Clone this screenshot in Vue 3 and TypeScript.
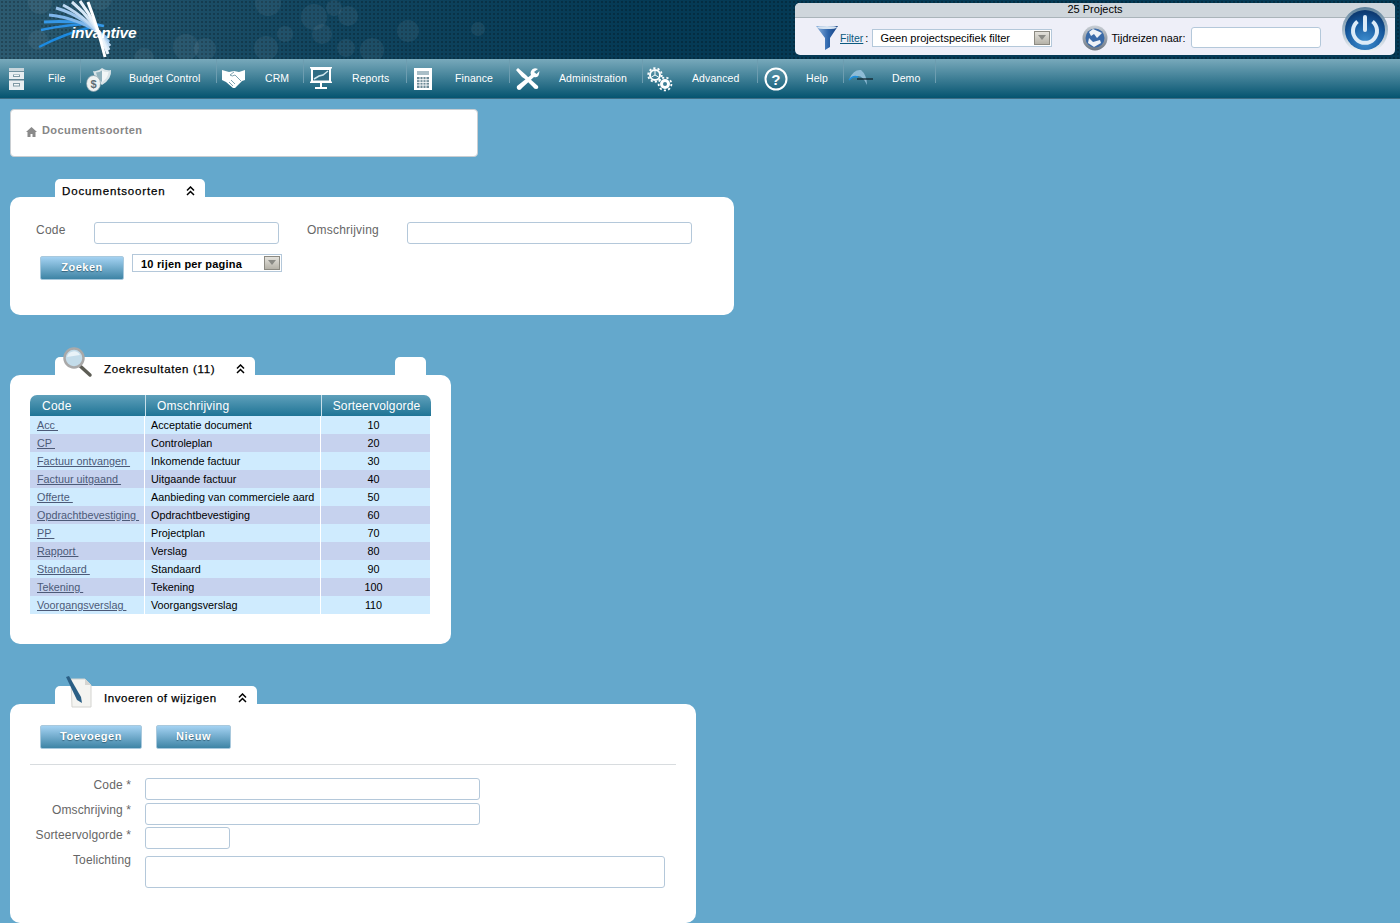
<template>
  <div class="page">
    <header class="top">
      <svg class="bubbles" width="760" height="59" viewBox="0 0 760 59">
        <g fill="#fff" fill-opacity=".06">
          <circle cx="40" cy="2" r="12" /><circle cx="100" cy="-2" r="12" /><circle cx="38" cy="40" r="10" />
          <circle cx="186" cy="47" r="13" /><circle cx="205" cy="49" r="11" /><circle cx="285" cy="34" r="8" />
          <circle cx="268" cy="3" r="13" /><circle cx="266" cy="48" r="12" /><circle cx="314" cy="17" r="13" />
          <circle cx="334" cy="8" r="8" /><circle cx="348" cy="16" r="10" /><circle cx="322" cy="34" r="10" />
          <circle cx="346" cy="48" r="9" /><circle cx="372" cy="50" r="12" /><circle cx="408" cy="31" r="11" />
          <circle cx="478" cy="29" r="7" /><circle cx="144" cy="58" r="10" />
        </g>
      </svg>
      <div class="logo">
        <svg width="115" height="59" viewBox="0 0 115 59">
          <g fill="none">
            <path d="M39 47 Q66 33 92 27" stroke="#1c8ae0" stroke-width="2.4" />
            <path d="M41 30 Q68 24 96 24" stroke="#2a90e4" stroke-width="2.4" />
            <path d="M44 22 Q74 20 104 26" stroke="#3597e6" stroke-width="2.8" />
            <path d="M49 15 Q80 18 107 38" stroke="#7fb6ea" stroke-width="3" />
            <path d="M56 8 Q84 16 109 42" stroke="#9cc5ec" stroke-width="3" />
            <path d="M63 5 Q88 18 110 46" stroke="#bcd7f1" stroke-width="3" />
            <path d="M72 2 Q94 20 109 50" stroke="#d6e7f6" stroke-width="3" />
            <path d="M80 1 Q97 24 108 54" stroke="#eaf3fb" stroke-width="3" />
            <path d="M88 2 Q98 28 105 57" stroke="#fff" stroke-width="3" />
          </g>
        </svg>
        <span class="logo-text">invantive</span>
      </div>
      <div class="project-box">
        <div class="project-count">25 Projects</div>
        <div class="project-row">
          <svg class="funnel" width="24" height="25" viewBox="0 0 24 25">
            <defs>
              <linearGradient id="fg" x1="0" x2="1" y1="0" y2="0">
                <stop offset="0" stop-color="#8fb4de" /><stop offset=".55" stop-color="#2e66ad" /><stop offset="1" stop-color="#16407f" />
              </linearGradient>
            </defs>
            <path d="M1 1 H23 L15 13 V22 L10 25 V13 Z" fill="url(#fg)" />
            <ellipse cx="12" cy="2.5" rx="10" ry="1.6" fill="#d6e3f1" />
          </svg>
          <a class="filter-link">Filter</a><span class="colon">:</span>
          <div class="combo top-combo">
            <span>Geen projectspecifiek filter</span>
            <i class="combo-btn"></i>
          </div>
          <svg class="clock" width="26" height="26" viewBox="0 0 26 26">
            <defs>
              <linearGradient id="cg" x1="0" x2="0" y1="0" y2="1">
                <stop offset="0" stop-color="#c9cfd6" /><stop offset="1" stop-color="#6c7682" />
              </linearGradient>
            </defs>
            <circle cx="13" cy="13" r="12.5" fill="url(#cg)" />
            <circle cx="13" cy="13" r="9.5" fill="#3a6aa8" />
            <path d="M11 4 L20 8 L15 13 L12 9 L9 11 L7 7 Z" fill="#eef2f7" />
            <path d="M7 13 L11 17 L18 15 L19 18 L12 22 L6 18 Z" fill="#eef2f7" />
          </svg>
          <label class="travel">Tijdreizen naar:</label>
          <input class="input travel-input" type="text">
        </div>
      </div>
      <div class="power">
        <svg width="48" height="48" viewBox="0 0 48 48">
          <defs>
            <radialGradient id="pg" cx=".5" cy=".8" r=".75">
              <stop offset="0" stop-color="#3f8fd0" /><stop offset=".65" stop-color="#175a9f" /><stop offset="1" stop-color="#0c3a72" />
            </radialGradient>
            <linearGradient id="pr" x1="0" x2="0" y1="0" y2="1">
              <stop offset="0" stop-color="#5a7f9a" /><stop offset="1" stop-color="#f5f7f9" />
            </linearGradient>
          </defs>
          <circle cx="24" cy="24" r="23" fill="url(#pr)" />
          <circle cx="24" cy="24" r="20" fill="url(#pg)" />
          <path d="M16.5 15.5 A12 12 0 1 0 31.5 15.5" fill="none" stroke="#dcebf8" stroke-width="4" />
          <path d="M24 11 V24" stroke="#dcebf8" stroke-width="4" stroke-linecap="round" />
        </svg>
      </div>
    </header>

    <nav class="menu">
      <div v-for="item in menu" :key="item.label" class="menu-item">
        <span class="menu-icon">
          <svg width="36" height="38" viewBox="0 0 36 38" v-html="item.icon"></svg>
        </span>
        <span>{{ item.label }}</span>
      </div>
    </nav>

    <main class="content">
      <div class="crumb">
        <svg width="11" height="10" viewBox="0 0 11 10"><path d="M5.5 0 L11 5 H9.5 V10 H6.5 V7 H4.5 V10 H1.5 V5 H0 Z" fill="#8a8a8a" /></svg>
        <span>Documentsoorten</span>
      </div>

      <section class="section first">
        <div class="tabs">
          <div class="tab tab-1"><span class="tab-title">Documentsoorten</span><span class="chev">
            <svg width="9" height="10" viewBox="0 0 9 10"><path d="M1 4.5 L4.5 1 L8 4.5 M1 9 L4.5 5.5 L8 9" fill="none" stroke="#000" stroke-width="1.5" /></svg>
          </span></div>
        </div>
        <div class="panel search-panel">
          <div class="search-row">
            <label class="lbl code-lbl">Code</label>
            <input class="input code-input" type="text">
            <label class="lbl oms-lbl">Omschrijving</label>
            <input class="input oms-input" type="text">
          </div>
          <div class="search-actions">
            <button class="btn zoeken">Zoeken</button>
            <div class="combo rows-combo">
              <span>10 rijen per pagina</span>
              <i class="combo-btn"></i>
            </div>
          </div>
        </div>
      </section>

      <section class="section second">
        <div class="tabs">
          <div class="tab tab-2">
            <svg class="tab-icon magnifier" width="32" height="32" viewBox="0 0 32 32">
              <path d="M17 18 L28 28" stroke="#5d5d55" stroke-width="3.5" stroke-linecap="round" />
              <circle cx="12" cy="11" r="9.5" fill="#c3dcea" stroke="#a9a9a9" stroke-width="2.5" />
              <path d="M5 10 A7 7 0 0 1 18 8 Z" fill="#e9f3f8" />
            </svg>
            <span class="tab-title">Zoekresultaten (11)</span><span class="chev">
              <svg width="9" height="10" viewBox="0 0 9 10"><path d="M1 4.5 L4.5 1 L8 4.5 M1 9 L4.5 5.5 L8 9" fill="none" stroke="#000" stroke-width="1.5" /></svg>
            </span>
          </div>
          <div class="tab tab-empty"></div>
        </div>
        <div class="panel table-panel">
          <table class="grid">
            <thead>
              <tr><th class="c1">Code</th><th class="c2">Omschrijving</th><th class="c3">Sorteervolgorde</th></tr>
            </thead>
            <tbody>
              <tr v-for="row in rows" :key="row.code">
                <td class="c1"><a>{{ row.code }}&nbsp;</a></td>
                <td class="c2">{{ row.desc }}</td>
                <td class="c3">{{ row.order }}</td>
              </tr>
            </tbody>
          </table>
        </div>
      </section>

      <section class="section third">
        <div class="tabs">
          <div class="tab tab-3">
            <svg class="tab-icon doc" width="28" height="32" viewBox="0 0 28 32">
              <path d="M6 3 H20 L26 9 V31 H7 Z" fill="#f4f4f1" stroke="#d4d4d0" />
              <path d="M20 3 V9 H26 Z" fill="#d5d5d2" />
              <path d="M1 1 L4 0 L16 21 L17 27 L12 24 Z" fill="#2b5f85" />
            </svg>
            <span class="tab-title">Invoeren of wijzigen</span><span class="chev">
              <svg width="9" height="10" viewBox="0 0 9 10"><path d="M1 4.5 L4.5 1 L8 4.5 M1 9 L4.5 5.5 L8 9" fill="none" stroke="#000" stroke-width="1.5" /></svg>
            </span>
          </div>
        </div>
        <div class="panel edit-panel">
          <div class="edit-actions">
            <button class="btn toevoegen">Toevoegen</button>
            <button class="btn nieuw">Nieuw</button>
          </div>
          <div class="edit-form">
            <label class="lbl form-lbl">Code *</label>
            <input class="input f-wide" type="text">
            <label class="lbl form-lbl">Omschrijving *</label>
            <input class="input f-wide" type="text">
            <label class="lbl form-lbl">Sorteervolgorde *</label>
            <input class="input f-small" type="text">
            <label class="lbl form-lbl note-lbl">Toelichting</label>
            <textarea class="input f-note"></textarea>
          </div>
        </div>
      </section>
    </main>
  </div>
</template>

<script setup lang="ts">
interface MenuItem { label: string; icon: string }
interface DocRow { code: string; desc: string; order: number }

const w = 'fill="#fff"'
const teal = '#3f7f97'
const menu: MenuItem[] = [
  {
    label: 'File',
    icon: `<g transform="translate(1,0)"><path d="M9 9 H24 V31 H9 Z" fill="#e8eef1"/><path d="M9 9 H24 V12 H9 Z" fill="#c9d6dc"/><path d="M9 20 H24 V21.5 H9 Z" fill="#5d8191"/><path d="M9 12 H24 V13 H9 Z" fill="#6f909e"/><path d="M13 15.5 H20 V18 H13 Z M13 24 H20 V27.5 H13 Z" fill="#7d98a4"/><path d="M14 16 H19 V17 H14 Z M14 25 H19 V26.5 H14 Z" fill="#f4f7f8"/></g>`,
  },
  {
    label: 'Budget Control',
    icon: `<path d="M13 12 Q18 13 22 9 Q26 12 31 11 Q32 20 22 26 Q15 21 13 12 Z" fill="#d9e4e8"/><path d="M16 13.5 Q19.5 13.5 22 11.5 V23 Q17.5 20 16 13.5 Z" fill="#8fb1bd"/><path d="M22 11.5 Q25 13.5 28.5 13 Q28 19 22 23 Z" fill="#f2f6f7"/><ellipse cx="13.5" cy="24.5" rx="7" ry="8" fill="#eef2f2" stroke="#7f9aa5" stroke-width=".7"/><text x="10.5" y="29" font-size="11" font-weight="700" font-family="Liberation Sans" fill="#5e6e75">$</text>`,
  },
  {
    label: 'CRM',
    icon: `<path d="M6 11 L13 13 L18 12 L23 13 L29 11 V21 L26 22 L19 29 L17 29 L10 23 L6 21 Z" ${w}/><path d="M18 13 L14 16 Q16 18 19 16 L25 22 M15 21 L19 25 M13 23 L17 27" stroke="#6f98a8" stroke-width=".9" fill="none"/>`,
  },
  {
    label: 'Reports',
    icon: `<path d="M7 8 H29 V9.5 H28 V22.5 H29 V24 H7 V22.5 H8 V9.5 H7 Z" ${w}/><path d="M10 11 H26 V21.5 H10 Z" fill="#2f6c84"/><path d="M11 20 L16 17 L20 16 L25 12" stroke="#cfe6ee" stroke-width="1.5" fill="none"/><path d="M17 24 H19 V28 H24 V30 H12 V28 H17 Z" ${w}/>`,
  },
  {
    label: 'Finance',
    icon: `<path d="M8 9 H26 V31 H8 Z" ${w}/><path d="M11 12 H23 V16 H11 Z" fill="#a9bec7"/><path d="M11 18 H23 V29 H11 Z" fill="#6d8a96"/><path d="M14 18 V29 M17 18 V29 M20 18 V29 M11 20.7 H23 M11 23.4 H23 M11 26.1 H23" stroke="#fff" stroke-width=".9"/>`,
  },
  {
    label: 'Administration',
    icon: `<path d="M7 11 L9 9 L17 16 L20 19 L29 27 Q30 30 27 30 Q25 30 24 28 L16 20 L13 18 Z" ${w}/><path d="M29 10 Q24 8 22 12 Q21 14 22 16 L8 27 Q7 30 10 31 Q12 31 13 29 L25 18 Q29 19 30 15 L30.5 12 L27.5 15 L25 13 Z" ${w}/>`,
  },
  {
    label: 'Advanced',
    icon: `<circle cx="13" cy="16" r="5" fill="none" stroke="#fff" stroke-width="2"/><circle cx="13" cy="16" r="6.8" fill="none" stroke="#fff" stroke-width="1.8" stroke-dasharray="2.2 2.1"/><path d="M13 12 V16 L9.5 18 M13 16 L16.5 18" stroke="#fff" fill="none"/><circle cx="23" cy="25" r="5" ${w}/><circle cx="23" cy="25" r="6.4" fill="none" stroke="#fff" stroke-width="1.8" stroke-dasharray="2.2 2.2"/><circle cx="23" cy="25" r="2" fill="${teal}"/>`,
  },
  {
    label: 'Help',
    icon: `<circle cx="19" cy="20" r="10.5" fill="none" stroke="#fff" stroke-width="2"/><text x="19" y="25.5" font-size="15" font-weight="700" font-family="Liberation Sans" text-anchor="middle" fill="#fff">?</text>`,
  },
  {
    label: 'Demo',
    icon: `<path d="M6 20 Q11 10 18 11 Q24 16 24 26 Q20 17 15 17 Q9 17 6 20 Z" fill="#8fbcd6"/><path d="M6 21 Q10 16 15 18" stroke="#1c8fe0" stroke-width="1.4" fill="none"/><path d="M14 20 H30" stroke="#10222c" stroke-width="1.3"/>`,
  },
]

const rows: DocRow[] = [
  { code: 'Acc', desc: 'Acceptatie document', order: 10 },
  { code: 'CP', desc: 'Controleplan', order: 20 },
  { code: 'Factuur ontvangen', desc: 'Inkomende factuur', order: 30 },
  { code: 'Factuur uitgaand', desc: 'Uitgaande factuur', order: 40 },
  { code: 'Offerte', desc: 'Aanbieding van commerciele aard', order: 50 },
  { code: 'Opdrachtbevestiging', desc: 'Opdrachtbevestiging', order: 60 },
  { code: 'PP', desc: 'Projectplan', order: 70 },
  { code: 'Rapport', desc: 'Verslag', order: 80 },
  { code: 'Standaard', desc: 'Standaard', order: 90 },
  { code: 'Tekening', desc: 'Tekening', order: 100 },
  { code: 'Voorgangsverslag', desc: 'Voorgangsverslag', order: 110 },
]
</script>

<style>
html, body { margin: 0; background: #64a8cc; }
</style>

<style scoped>
.page {
  width: 1400px;
  height: 923px;
  overflow: hidden;
  background: #64a8cc;
  font-family: "Liberation Sans", Arial, sans-serif;
  font-size: 11px;
  color: #000;
}

.top {
  position: relative;
  height: 59px;
  display: flex;
  background-color: #04344f;
  background-image:
    radial-gradient(rgba(0,0,0,.22) 1px, transparent 1.2px),
    linear-gradient(90deg, #2c5a70 0, #124660 22%, #053a55 45%);
  background-size: 4px 4px, 100% 100%;
}
.bubbles { position: absolute; left: 0; top: 0; }
.logo { position: relative; width: 795px; height: 59px; }
.logo-text {
  position: absolute;
  left: 71px;
  top: 24px;
  color: #fff;
  font: italic 700 15.5px "Liberation Sans", sans-serif;
  letter-spacing: -.2px;
}

.project-box {
  position: relative;
  width: 600px;
  height: 52px;
  margin-top: 3px;
  border-radius: 5px;
  background: #eeeff8;
  overflow: hidden;
}
.project-count {
  height: 14px;
  line-height: 13px;
  text-align: center;
  background: #cfd6dc;
  border-bottom: 1px solid #aab4ba;
}
.project-row {
  display: flex;
  align-items: center;
  box-sizing: border-box;
  height: 37px;
  padding: 2px 0 0 20px;
}
.filter-link { margin-left: 1px; color: #0b5a80; text-decoration: underline; font-size: 10.5px; padding-right: 1px; }
.colon { margin-left: 1px; }
.top-combo { width: 180px; height: 18px; margin-left: 4px; padding-left: 7px; font-size: 11px; }
.clock { margin-left: 30px; }
.travel { width: 74px; margin-left: 3px; white-space: nowrap; font-size: 10.8px; }

.power { position: absolute; right: 11px; top: 6px; height: 48px; }

.menu {
  height: 40px;
  display: grid;
  grid-template-columns: 81px 136px 87px 103px 103px 133px 115px 86px 92px;
  justify-content: start;
  box-sizing: border-box;
  border-bottom: 1px solid #3d6d84;
  background: linear-gradient(#78a9bb, #055470);
  color: #fff;
  font-size: 10.5px;
  letter-spacing: .1px;
}
.menu-item {
  position: relative;
  display: flex;
  align-items: center;
  padding: 0 0 2px 48px;
}
.menu-item:nth-child(6),
.menu-item:nth-child(7) { padding-left: 49px; }
.menu-item::after {
  content: "";
  position: absolute;
  right: 0;
  top: 0;
  height: 24px;
  width: 1px;
  background: #6d9db0;
}
.menu-icon { position: absolute; left: -1px; top: 0; height: 38px; }

.content { padding: 10px 0 0 10px; }
.crumb {
  box-sizing: border-box;
  width: 468px;
  height: 48px;
  padding: 14px 15px 0;
  display: flex;
  align-items: flex-start;
  gap: 5px;
  background: #fff;
  border: 1px solid #c9ced2;
  border-radius: 4px;
  color: #868686;
  font-weight: 700;
  letter-spacing: .42px;
}
.crumb svg { margin-top: 3px; }

.section.first { margin-top: 22px; }
.section.second { margin-top: 42px; }
.section.third { margin-top: 42px; }

.tabs { display: flex; height: 18px; padding-left: 45px; }
.tab {
  position: relative;
  display: flex;
  box-sizing: border-box;
  height: 18px;
  padding-top: 5px;
  background: #fff;
  border-radius: 5px 5px 0 0;
}
.tab-title { font-size: 11.5px; letter-spacing: .65px; -webkit-text-stroke: .25px #000; line-height: 14px; white-space: nowrap; }
.chev { position: absolute; top: 7px; }
.tab-1 { width: 150px; padding-left: 7px; }
.tab-1 .tab-title { letter-spacing: .85px; }
.tab-1 .chev { left: 131px; }
.tab-2 { width: 200px; padding-left: 49px; }
.tab-2 .chev { left: 181px; }
.tab-empty { width: 31px; margin-left: 140px; }
.tab-3 { width: 202px; padding-left: 49px; }
.tab-3 .tab-title { letter-spacing: .55px; }
.tab-3 .chev { left: 183px; }
.tab-icon { position: absolute; }
.magnifier { left: 7px; top: -10px; }
.doc { left: 10px; top: -10px; }

.panel {
  box-sizing: border-box;
  background: #fff;
  border-radius: 10px;
}
.search-panel { width: 724px; height: 118px; padding: 25px 0 0 26px; }
.search-row { display: flex; align-items: flex-start; }
.lbl { color: #666; font-size: 12px; letter-spacing: .22px; }
.code-lbl { width: 58px; line-height: 15px; padding-top: 1px; }
.oms-lbl { width: 100px; margin-left: 28px; line-height: 15px; padding-top: 1px; }
.input {
  box-sizing: border-box;
  display: block;
  background: #fff;
  border: 1px solid #b4c8da;
  border-radius: 3px;
  margin: 0;
  padding: 0;
  outline: none;
  resize: none;
}
.travel-input { width: 130px; height: 21px; margin-left: 6px; }
.code-input { width: 185px; height: 22px; }
.oms-input { width: 285px; height: 22px; }
.search-actions { display: flex; align-items: flex-start; margin-top: 10px; padding-left: 4px; }

.btn {
  box-sizing: border-box;
  height: 24px;
  padding: 0 0 3px;
  border: 1px solid #a9c9dd;
  border-radius: 2px;
  background: linear-gradient(#a4d2f2, #3e84a5);
  color: #fff;
  font: 700 11px "Liberation Sans", sans-serif;
  letter-spacing: .5px;
  text-shadow: 0 1px 1px #33627a;
}
.zoeken { width: 84px; margin-top: 2px; }

.combo {
  position: relative;
  box-sizing: border-box;
  display: flex;
  align-items: center;
  background: #fff;
  border: 1px solid #b4c8da;
}
.combo-btn {
  position: absolute;
  right: 1px;
  top: 1px;
  width: 16px;
  height: 14px;
  box-sizing: border-box;
  background: linear-gradient(#e4e2dc, #b5b2a8);
  border: 1px solid #8c8a82;
}
.combo-btn::after {
  content: "";
  position: absolute;
  left: 3px;
  top: 3px;
  border: 4px solid transparent;
  border-top: 5px solid #8a8a85;
}
.rows-combo {
  width: 150px;
  height: 18px;
  margin-left: 8px;
  padding: 2px 0 0 8px;
  font-weight: 700;
  font-size: 11px;
  letter-spacing: .2px;
}

.table-panel { width: 441px; height: 269px; padding: 20px 20px 0; }
.grid { border-collapse: separate; border-spacing: 0; table-layout: fixed; width: 401px; font-size: 10.8px; }
.grid th {
  height: 21px;
  padding: 0 0 0 12px;
  box-sizing: border-box;
  text-align: left;
  color: #fff;
  font-weight: 400;
  font-size: 12px;
  letter-spacing: .25px;
  background: linear-gradient(#5fa0bb, #1f7495);
}
.grid th.c1 { width: 115px; border-top-left-radius: 7px; }
.grid th.c2 { width: 176px; padding-left: 11px; border-left: 1px solid #c8e0ea; }
.grid th.c3 { width: 110px; border-left: 1px solid #c8e0ea; border-top-right-radius: 7px; text-align: center; padding: 0; letter-spacing: .15px; }
.grid td {
  height: 18px;
  padding: 0 0 0 6px;
  box-sizing: border-box;
  background: #cfebfe;
  border-right: 1px solid #fff;
  white-space: nowrap;
  overflow: hidden;
}
.grid td.c1 { padding-left: 7px; }
.grid td.c3 { text-align: center; padding: 0 4px 0 0; }
.grid tbody tr:nth-child(even) td { background: #c6d2ee; }
.grid a { color: #4c5a78; text-decoration: underline; }

.edit-panel { width: 686px; height: 219px; padding: 21px 20px 0; }
.edit-actions {
  display: flex;
  gap: 14px;
  width: 646px;
  box-sizing: border-box;
  padding: 0 0 15px 10px;
  border-bottom: 1px solid #d8dcdf;
}
.toevoegen { width: 102px; }
.nieuw { width: 75px; }
.edit-form {
  display: grid;
  grid-template-columns: 101px 1fr;
  column-gap: 14px;
  row-gap: 3px;
  margin-top: 13px;
}
.form-lbl { text-align: right; line-height: 15px; white-space: nowrap; letter-spacing: .12px; }
.f-wide { width: 335px; height: 22px; }
.f-small { width: 85px; height: 22px; margin-top: -1px; }
.f-note { width: 520px; height: 32px; margin-top: 4px; }
.note-lbl { padding-top: 1px; }
</style>
